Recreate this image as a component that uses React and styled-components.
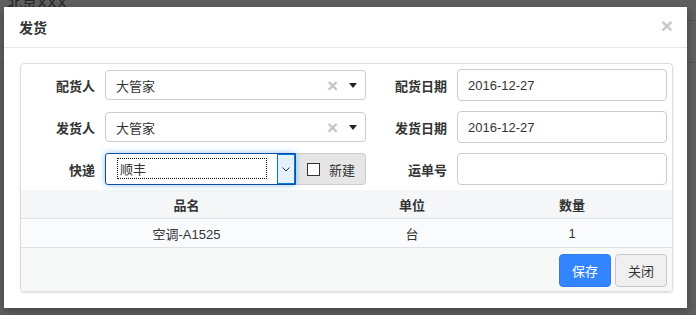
import React from "react"
import styled, { createGlobalStyle } from "styled-components"

const GlobalStyle = createGlobalStyle`
    body{
        margin: 0;
        font-family: "Liberation Sans", "Noto Sans CJK SC", sans-serif;
        font-size: 13px;
        color: #333;
    }
`

const Screen = styled.div`
    position: relative;
    width: 696px;
    height: 315px;
    background: #5f5f5f;
    overflow: hidden;
`

const BehindText = styled.div`
    position: absolute;
    left: 7px;
    top: -9px;
    font-size: 15px;
    color: #262626;
`

const BehindLine = styled.div`
    position: absolute;
    left: 0;
    right: 0;
    top: ${p => p.top}px;
    height: 1px;
    background: #555;
`

const Modal = styled.div`
    position: absolute;
    left: 4px;
    top: 7px;
    width: 683px;
    height: 301px;
    background: #fff;
    box-shadow: 0 3px 9px rgba(0,0,0,.3);
`

const Header = styled.div`
    height: 40px;
    border-bottom: 1px solid #e5e5e5;
    display: flex;
    align-items: center;
    justify-content: space-between;
    padding: 0 14px 0 15px;
    h4{
        margin: 0;
        font-size: 14px;
        font-weight: bold;
        color: #333;
    }
`

const CloseX = styled.span`
    font-size: 21px;
    font-weight: bold;
    color: #c8c8c8;
    line-height: 1;
    margin-top: -3px;
`

const Body = styled.div`
    padding: 15px 14px 0 16px;
`

const Panel = styled.div`
    border: 1px solid #ddd;
    border-radius: 4px;
    box-shadow: 0 1px 2px rgba(0,0,0,.12);
    overflow: hidden;
`

const Form = styled.div`
    padding: 5px 0 5px 0;
    display: flex;
    flex-direction: column;
    gap: 10px;
`

const FormRow = styled.div`
    display: grid;
    grid-template-columns: 74px 261px 71px 210px;
    column-gap: 10px;
    align-items: center;
    height: 32px;
`

const Label = styled.label`
    text-align: right;
    font-weight: bold;
    color: #333;
`

const Select2 = styled.div`
    height: 30px;
    border: 1px solid #ccc;
    border-radius: 4px;
    box-sizing: border-box;
    display: flex;
    align-items: center;
    padding: 0 8px 0 10px;
    .value{ flex: 1; }
    .clear{
        color: #c4c4c4;
        font-weight: bold;
        font-size: 19px;
        line-height: 1;
        margin-right: 11px;
    }
    .arrow{
        width: 0;
        height: 0;
        border-left: 4px solid transparent;
        border-right: 4px solid transparent;
        border-top: 5px solid #222;
    }
`

const Input = styled.input`
    height: 32px;
    width: 100%;
    box-sizing: border-box;
    border: 1px solid #ccc;
    border-radius: 4px;
    padding: 0 10px;
    font: inherit;
    color: #333;
    outline: none;
`

const Group = styled.div`
    display: flex;
    height: 32px;
`

const NativeSelect = styled.div`
    width: 191px;
    box-sizing: border-box;
    border: 1px solid #0b4ea8;
    border-radius: 3px 0 0 3px;
    box-shadow: 0 0 6px rgba(102,175,233,.7);
    display: flex;
    align-items: stretch;
    padding: 3px 0 0 0;
    background: #fff;
    position: relative;
    z-index: 1;
    .text{
        flex: 1;
        margin: 1px 10px 5px 11px;
        border: 1px dotted #111;
        display: flex;
        align-items: center;
        padding-left: 2px;
    }
    .btn{
        width: 16px;
        margin-top: -3px;
        background: #e5f1fb;
        border: 1px solid #0078d7;
        display: flex;
        align-items: center;
        justify-content: center;
    }
`

const Addon = styled.div`
    flex: 1;
    background: #e6e6e6;
    border: 1px solid #ccc;
    border-left: none;
    border-radius: 0 4px 4px 0;
    display: flex;
    align-items: center;
    padding-left: 11px;
    gap: 9px;
    .box{
        width: 11px;
        height: 11px;
        border: 1px solid #333;
        background: #fff;
    }
`

const Table = styled.table`
    width: 100%;
    border-collapse: collapse;
    table-layout: fixed;
    th, td{
        text-align: center;
        border-bottom: 1px solid #dde0e4;
        padding: 0;
    }
    th{
        height: 28px;
        background: #f4f6f8;
        font-weight: bold;
    }
    td{
        height: 28px;
        background: #fafbfd;
    }
`

const Footer = styled.div`
    background: #f7f8f8;
    display: flex;
    justify-content: flex-end;
    gap: 4px;
    padding: 6px 5px 4px 0;
`

const Button = styled.button`
    width: 52px;
    height: 33px;
    border-radius: 4px;
    font: inherit;
    border: 1px solid ${p => p.primary ? "#2f7cf0" : "#c6c6c6"};
    background: ${p => p.primary ? "#3385ff" : "#f0f0f0"};
    color: ${p => p.primary ? "#fff" : "#333"};
`

function Chevron() {
    return (
        <svg width="8" height="5" viewBox="0 0 8 5">
            <path d="M0.5 0.5 L4 4 L7.5 0.5" fill="none" stroke="#333" strokeWidth="1" />
        </svg>
    )
}

function PersonSelect({ value }) {
    return (
        <Select2>
            <span className="value">{value}</span>
            <span className="clear">×</span>
            <span className="arrow" />
        </Select2>
    )
}

export default function App() {
    const rows = [{ name: "空调-A1525", unit: "台", qty: 1 }]
    return (
        <Screen>
            <GlobalStyle />
            <BehindText>北京XXX</BehindText>
            <BehindLine top={20} />
            <BehindLine top={62} />
            <Modal>
                <Header>
                    <h4>发货</h4>
                    <CloseX>×</CloseX>
                </Header>
                <Body>
                    <Panel>
                        <Form>
                            <FormRow>
                                <Label>配货人</Label>
                                <PersonSelect value="大管家" />
                                <Label>配货日期</Label>
                                <Input defaultValue="2016-12-27" />
                            </FormRow>
                            <FormRow>
                                <Label>发货人</Label>
                                <PersonSelect value="大管家" />
                                <Label>发货日期</Label>
                                <Input defaultValue="2016-12-27" />
                            </FormRow>
                            <FormRow>
                                <Label>快递</Label>
                                <Group>
                                    <NativeSelect>
                                        <span className="text">顺丰</span>
                                        <span className="btn"><Chevron /></span>
                                    </NativeSelect>
                                    <Addon>
                                        <span className="box" />
                                        <span>新建</span>
                                    </Addon>
                                </Group>
                                <Label>运单号</Label>
                                <Input />
                            </FormRow>
                        </Form>
                        <Table>
                            <colgroup>
                                <col style={{ width: 331 }} />
                                <col style={{ width: 120 }} />
                                <col />
                            </colgroup>
                            <thead>
                                <tr><th>品名</th><th>单位</th><th>数量</th></tr>
                            </thead>
                            <tbody>
                                {rows.map(r => (
                                    <tr key={r.name}><td>{r.name}</td><td>{r.unit}</td><td>{r.qty}</td></tr>
                                ))}
                            </tbody>
                        </Table>
                        <Footer>
                            <Button primary>保存</Button>
                            <Button>关闭</Button>
                        </Footer>
                    </Panel>
                </Body>
            </Modal>
        </Screen>
    )
}
